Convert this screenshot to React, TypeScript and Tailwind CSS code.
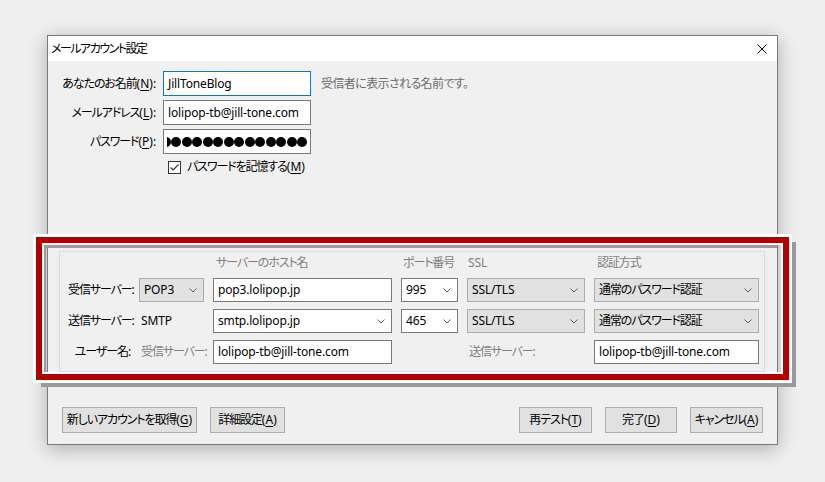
import type { ReactNode } from "react";

/** Access key in parentheses, with the letter underlined, as in "(N)". */
function Key({ children }: { children: string }) {
  return (
    <span className="tracking-normal">
      (<span className="underline decoration-1 underline-offset-[2px]">{children}</span>)
    </span>
  );
}

function Chevron() {
  return (
    <svg width="8" height="5" viewBox="0 0 8 5" className="shrink-0">
      <path d="M0.5 0.5L4 4L7.5 0.5" fill="none" stroke="#5f5f5f" strokeWidth="1" />
    </svg>
  );
}

// Latin values keep (almost) normal spacing; Japanese text is tightened at the root.
function Latin({ children }: { children: string }) {
  return <span className="tracking-[-0.15px]">{children}</span>;
}

function Select({ value, editable = false }: { value: ReactNode; editable?: boolean }) {
  return (
    <div
      className={
        editable
          ? "flex h-[24px] items-center justify-between border border-[#7a7a7a] bg-white pl-[4px] pr-[6px]"
          : "flex h-[24px] items-center justify-between border border-[#adadad] bg-[#e1e1e1] pl-[4px] pr-[6px]"
      }
    >
      <span>{value}</span>
      <Chevron />
    </div>
  );
}

function TextBox({ value, focused = false }: { value: string; focused?: boolean }) {
  return (
    <div
      className={
        focused
          ? "flex h-[25px] w-[148px] items-center border border-[#0078d7] bg-white px-[4px]"
          : "flex h-[25px] w-[148px] items-center border border-[#7a7a7a] bg-white px-[4px]"
      }
    >
      <Latin>{value}</Latin>
    </div>
  );
}

function Field({ value }: { value: string }) {
  return (
    <div className="flex h-[24px] items-center border border-[#7a7a7a] bg-white px-[4px]">
      <Latin>{value}</Latin>
    </div>
  );
}

function FormRow({ label, children }: { label: ReactNode; children: ReactNode }) {
  return (
    <div className="flex h-[25px] items-center">
      <div className="w-[107px] text-right">{label}</div>
      <div className="ml-[8px] flex items-center">{children}</div>
    </div>
  );
}

function Button({ children, width }: { children: ReactNode; width: string }) {
  return (
    <div
      className={`flex h-[26px] items-center justify-center border border-[#adadad] bg-[#e1e1e1] ${width}`}
    >
      {children}
    </div>
  );
}

export default function App() {
  return (
    <div className="relative h-[482px] w-[825px] overflow-hidden whitespace-nowrap bg-[#efefef] pl-[47px] pt-[35px] font-['Noto_Sans','Noto_Sans_CJK_JP',sans-serif] text-[12px] leading-none tracking-[-1.1px] text-black [font-feature-settings:'palt']">
      <div className="flex h-[410px] w-[731px] flex-col border border-[#7a7a7a] bg-[#f0f0f0] shadow-[0_4px_18px_rgba(0,0,0,0.28)]">
        {/* title bar */}
        <div className="flex h-[25px] items-center justify-between bg-white pl-[3px] pr-[10px]">
          <span className="tracking-[-1.5px]">メールアカウント設定</span>
          <svg width="10" height="10" viewBox="0 0 10 10">
            <path d="M0.5 0.5L9.5 9.5M9.5 0.5L0.5 9.5" stroke="#000" strokeWidth="1" />
          </svg>
        </div>

        <div className="flex flex-1 flex-col">
          <div className="flex flex-col gap-[4px] pt-[10px]">
            <FormRow label={<>あなたのお名前<Key>N</Key>:</>}>
              <TextBox value="JillToneBlog" focused />
              <span className="ml-[10px] tracking-[-0.6px] text-[#6d6d6d]">受信者に表示される名前です。</span>
            </FormRow>
            <FormRow label={<>メールアドレス<Key>L</Key>:</>}>
              <TextBox value="lolipop-tb@jill-tone.com" />
            </FormRow>
            <FormRow label={<>パスワード<Key>P</Key>:</>}>
              <div className="flex h-[25px] w-[148px] items-center border border-[#7a7a7a] bg-white px-[3px]">
                <div className="flex flex-1 justify-end gap-[0.5px] overflow-hidden">
                  {Array.from({ length: 14 }).map((_, i) => (
                    <span key={i} className="h-[10px] w-[10px] shrink-0 rounded-full bg-black" />
                  ))}
                </div>
              </div>
            </FormRow>
          </div>

          <label className="ml-[120px] mt-[5px] flex h-[16px] items-center gap-[6px]">
            <span className="flex h-[13px] w-[13px] items-center justify-center border border-[#333] bg-white">
              <svg width="9" height="7" viewBox="0 0 9 7">
                <path d="M0.5 3.5L3.2 6L8.5 0.5" fill="none" stroke="#333" strokeWidth="1.2" />
              </svg>
            </span>
            <span>
              パスワードを記憶する<Key>M</Key>
            </span>
          </label>

          {/* server settings */}
          <div className="ml-[11px] mt-[76px] w-[706px] border border-[#dcdcdc] pb-[7px] pl-[8px] pt-[1px]">
            <div className="grid grid-cols-[62px_65px_179px_57px_118px_165px] items-center gap-x-[9px]">
              <div className="col-start-3 flex h-[20px] items-center pl-[3px] text-[#7f7f7f]">サーバーのホスト名</div>
              <div className="flex h-[20px] items-center pl-[2px] text-[#7f7f7f]">ポート番号</div>
              <div className="flex h-[20px] items-center pl-[1px] text-[#7f7f7f]">
                <Latin>SSL</Latin>
              </div>
              <div className="flex h-[20px] items-center pl-[3px] text-[#7f7f7f]">認証方式</div>
            </div>

            <div className="mt-[5px] grid grid-cols-[62px_65px_179px_57px_118px_165px] grid-rows-[24px_24px_24px] items-center gap-x-[9px] gap-y-[7px]">
              <div className="text-right">受信サーバー:</div>
              <Select value={<Latin>POP3</Latin>} />
              <Field value="pop3.lolipop.jp" />
              <Select value={<Latin>995</Latin>} editable />
              <Select value={<Latin>SSL/TLS</Latin>} />
              <Select value="通常のパスワード認証" />

              <div className="text-right">送信サーバー:</div>
              <div className="pl-[2px]">
                <Latin>SMTP</Latin>
              </div>
              <Select value={<Latin>smtp.lolipop.jp</Latin>} editable />
              <Select value={<Latin>465</Latin>} editable />
              <Select value={<Latin>SSL/TLS</Latin>} />
              <Select value="通常のパスワード認証" />

              <div className="text-right">ユーザー名:</div>
              <div className="pl-[2px] text-[#7f7f7f]">受信サーバー:</div>
              <Field value="lolipop-tb@jill-tone.com" />
              <div />
              <div className="pl-[2px] text-[#7f7f7f]">送信サーバー:</div>
              <Field value="lolipop-tb@jill-tone.com" />
            </div>
          </div>

          <div className="mx-[14px] mt-[35px] flex justify-between">
            <div className="flex gap-[13px]">
              <Button width="w-[135px]">
                新しいアカウントを取得<Key>G</Key>
              </Button>
              <Button width="w-[75px]">
                詳細設定<Key>A</Key>
              </Button>
            </div>
            <div className="flex gap-[13px]">
              <Button width="w-[73px]">
                再テスト<Key>T</Key>
              </Button>
              <Button width="w-[72px]">
                完了<Key>D</Key>
              </Button>
              <Button width="w-[73px]">
                キャンセル<Key>A</Key>
              </Button>
            </div>
          </div>
        </div>
      </div>

      {/* red annotation frame drawn over the screenshot */}
      <div className="pointer-events-none absolute left-[33px] top-[234px] h-[149px] w-[759px] border-[3px] border-white shadow-[6px_6px_0_-2px_#999]">
        <div className="h-full w-full border-[6px] border-[#b30000]">
          <div className="h-full w-full border-[2px] border-white">
            <div className="h-full w-[733px] border-l-[2px] border-t-[3px] border-[#9a9a9a]" />
          </div>
        </div>
      </div>
    </div>
  );
}
